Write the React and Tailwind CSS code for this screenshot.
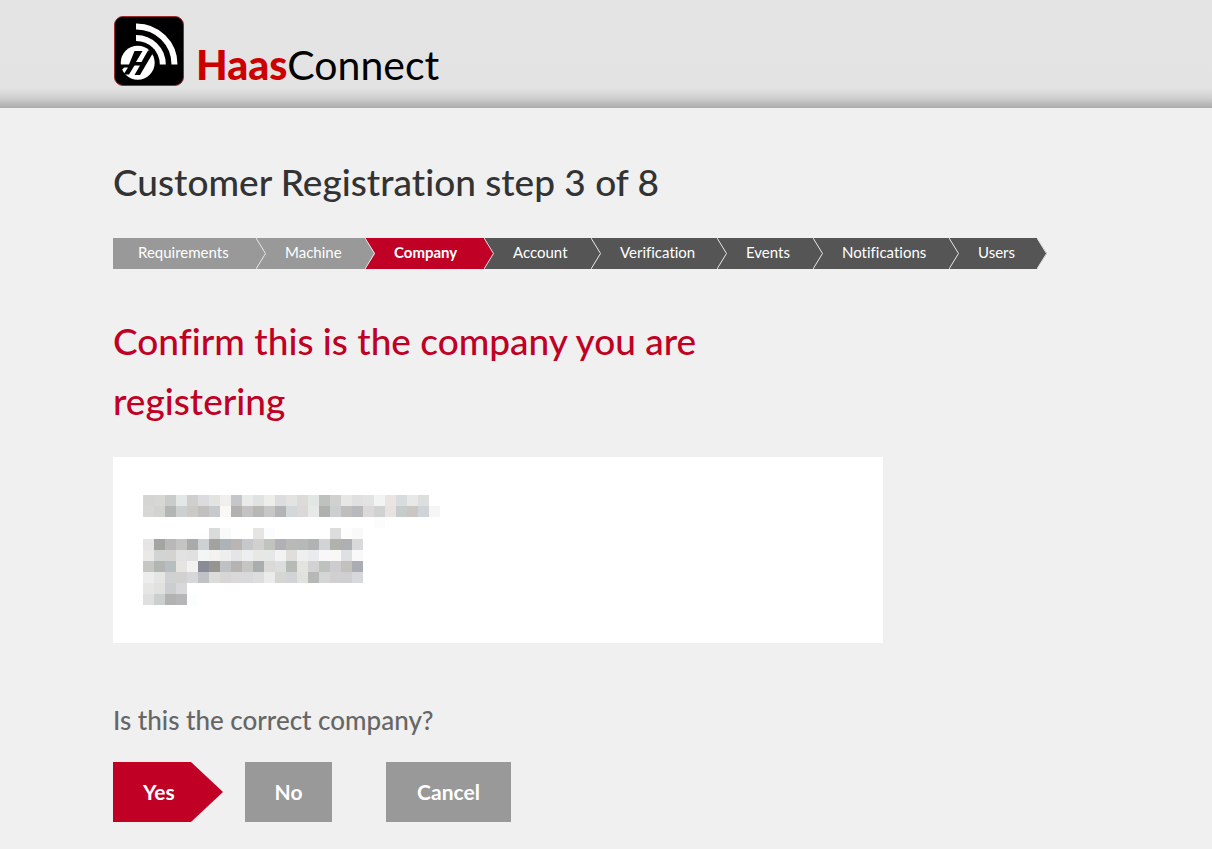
const steps = [
  { label: "Requirements", state: "done", width: "w-[143px] pl-[25px]" },
  { label: "Machine", state: "done", width: "w-[109px] pl-[29px]" },
  { label: "Company", state: "current", width: "w-[119px] pl-[29px]" },
  { label: "Account", state: "todo", width: "w-[107px] pl-[29px]" },
  { label: "Verification", state: "todo", width: "w-[126px] pl-[29px]" },
  { label: "Events", state: "todo", width: "w-[96px] pl-[29px]" },
  { label: "Notifications", state: "todo", width: "w-[136px] pl-[29px]" },
  { label: "Users", state: "todo", width: "w-[88px] pl-[29px]" },
];

const stepStyles = {
  done: "bg-[#999999] text-[#999999]",
  current: "bg-[#c00024] text-[#c00024] font-bold",
  todo: "bg-[#555555] text-[#555555]",
};

// One string per mosaic row, "-" is an empty cell
const mosaic = [
  "d5d5d3 d7d8d6 c9cccb e3e7e6 cfd0ce dcdcde e3e3e2 f0efed c5c6c9 eaebe9 dfe3e2 edeeec dddde0 e3e3e1 dddada e2e6e5 bfc1bd d1d1cf e7e7e5 e0e0e1 e3e3e4 f1f4f3 eae5e3 d7dcdd e8e8e9 dcdfde",
  "d7d8d6 d3d4d0 b3b6b5 cdd0d1 cdcac6 c1c0be c5cbcc f9f8f6 b2b1b0 c3c3c3 b8b7b5 c7c7c7 b2b5b5 d2d7da dcd8d7 e6e9e8 afb1ae cccfcf c0bebd b8b9bc dcd9d8 d0d2d1 e8e3e1 c6cccb cac6c1 cfd4d8 f4f7f6",
  "- - - - - - - - - - - - - - - - - - - - - fcfcfc",
  "- - - - - - d9dcdb f7faf9 - - e6e5e3 fafcfe - - - - - dddddd fdfdfd f9f9f9",
  "e5e5e5 a4a4a1 b8b8b8 c4c4c3 a8abaa cdd1d3 a3a29f aeb3b7 b8b5b4 c6c8cb d0d0ce c2c3be b0b1b6 b9b9b8 b7b9b8 b0b3b2 d2d3d7 b2b2ac aeafb2 d9d9dc",
  "e9e9e8 d2d3d3 d3d4d2 e2e2e3 e0e0e1 f3f6f5 f3f2f0 eeeeef e5e5e7 eceef0 e7e7e5 e5e8e6 f1f4f3 e0dedd eef0f0 e9ebee f8f8f8 f8f8f6 dfe0e3 f9f9f9",
  "c6c7c2 b3b5b2 b6bebf e6e4e1 f2f2f0 898b96 969590 c0c1c4 b5b4b3 c5c5c1 aaadae dcdad9 dcdddf b8bab6 e3e4e0 d2d2d3 bfc1be cdcdcf c2c1bc abadb5",
  "ededee e5e5e4 d0d1d3 d1d1d0 d7d7d9 c1c2c5 dcdcda d7d6d4 d9d9da d9d9db dbdedd ebebea d5d6d1 d2d3d6 e1e2dd b6b8b8 d4d6d5 d1cfcf cfcfd1 d7d8db",
  "e6e6e5 e1e2e0 cccdd1 d8d8da",
  "dfdfdf cdcfce b2b2b1 b5b6b5 fbfdfe",
];

function Logo() {
  return (
    <svg width="70" height="70" viewBox="0 0 70 70" aria-hidden="true">
      <rect x="0.5" y="0.5" width="69" height="69" rx="8.5" fill="#000" stroke="#9c2a2a" />
      <g fill="none" stroke="#fff" strokeWidth="6">
        <path d="M22 10.5A38 38 0 0 1 60.5 48.5" />
        <path d="M22 22A26.5 26.5 0 0 1 48.8 48.5" />
      </g>
      <circle cx="23.7" cy="46.7" r="17" fill="#fff" />
      <g fill="#000">
        <path d="M20.500 35H28.500L22 46H27.500L34 34.500L41 33.500L26 59H20.500L26 49.500H20.500L15 58.500H9.500L14 51.500H10L8.500 53.500H5L6 48.500H15Z" />
      </g>
    </svg>
  );
}

function Step({ label, state, width }) {
  return (
    <li className={`relative h-[31px] ${width} ${stepStyles[state]}`}>
      <a
        href="#"
        aria-current={state === "current" ? "step" : undefined}
        className="block text-[15px] leading-[29px] text-white whitespace-nowrap"
      >
        {label}
      </a>
      <svg
        className="absolute left-full top-0 z-10"
        width="10"
        height="31"
        viewBox="0 0 10 31"
        aria-hidden="true"
      >
        <path d="M0 0L10 15.5L0 31Z" fill="currentColor" />
        <path d="M0 0L9.5 15.5L0 31" fill="none" stroke="#e8e8e8" />
      </svg>
    </li>
  );
}

function RedactedAddress() {
  return (
    <svg width="297" height="110" role="img" aria-label="Company address" shapeRendering="crispEdges">
      {mosaic.map((row, y) =>
        row
          .split(" ")
          .map((color, x) =>
            color === "-" ? null : (
              <rect key={`${x}-${y}`} x={x * 11} y={y * 11} width="11" height="11" fill={`#${color}`} />
            )
          )
      )}
    </svg>
  );
}

export default function App() {
  return (
    <div className="min-h-screen bg-[#f0f0f0] font-['Lato',sans-serif] text-[#333333] [font-variant-ligatures:none]">
      <header className="h-[108px] bg-[linear-gradient(to_bottom,#e4e4e4_0,#e3e3e3_88px,#cfcfcf_98px,#ababab_108px)]">
        <div className="mx-auto flex max-w-[986px] items-start pl-px pt-4">
          <Logo />
          <p className="ml-3 mt-6 text-[41px] leading-[50px] text-black">
            <strong className="font-black text-[#cc0000]">Haas</strong>Connect
          </p>
        </div>
      </header>

      <main className="mx-auto max-w-[986px] pt-11 pb-[27px]">
        <h1 className="text-[37px] leading-[60px] font-medium">
          Customer Registration step 3 of 8
        </h1>

        <nav aria-label="Registration steps" className="mt-[26px]">
          <ol className="flex">
            {steps.map((step) => (
              <Step key={step.label} {...step} />
            ))}
          </ol>
        </nav>

        <section className="mt-[42px] max-w-[770px]">
          <h2 className="max-w-[660px] text-[37px] leading-[60px] font-medium text-[#c00024]">
            Confirm this is the company you are registering
          </h2>
          <div className="mt-[26px] bg-white px-[30px] py-[38px]">
            <RedactedAddress />
          </div>
        </section>

        <h3 className="mt-[57px] text-[26px] leading-[40px] font-medium text-[#666666]">
          Is this the correct company?
        </h3>

        <div className="mt-[22px] flex text-[21px] leading-[60px] font-bold text-white">
          <button
            type="button"
            className="h-[60px] w-[110px] bg-[#c00024] pl-[30px] text-left [clip-path:polygon(0_0,78px_0,100%_50%,78px_100%,0_100%)]"
          >
            Yes
          </button>
          <button type="button" className="ml-[22px] h-[60px] w-[87px] bg-[#999999]">
            No
          </button>
          <button type="button" className="ml-[54px] h-[60px] w-[125px] bg-[#999999]">
            Cancel
          </button>
        </div>
      </main>
    </div>
  );
}
